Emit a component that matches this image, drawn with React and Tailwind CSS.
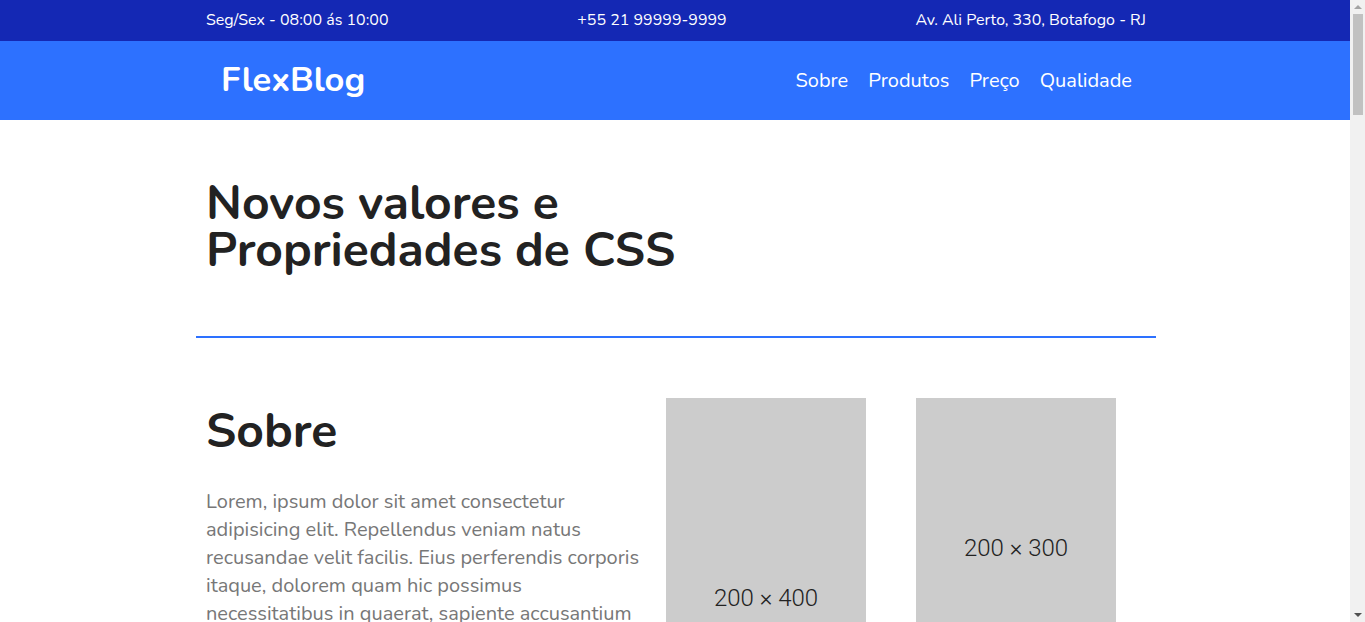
import React from 'react';

const font = { fontFamily: 'Nunito, Lato, "Open Sans", sans-serif' };

const lorem =
  'Lorem, ipsum dolor sit amet consectetur adipisicing elit. Repellendus veniam natus recusandae velit facilis. Eius perferendis corporis itaque, dolorem quam hic possimus necessitatibus in quaerat, sapiente accusantium ipsam nihil quas officiis dolorum, modi explicabo tempora ad voluptate.';

// gray placeholder box like the placeholder.com images
const Placeholder = ({ w, h }) => (
  <div
    className="bg-[#cccccc] flex items-center justify-center text-[#222] text-[24px] font-light shrink-0"
    style={{ width: w, height: h, fontFamily: 'Roboto, sans-serif' }}
  >
    {w} × {h}
  </div>
);

// classic windows scrollbar sitting over the right edge
const Scrollbar = () => (
  <div className="fixed top-0 right-0 h-screen w-[15px] bg-[#f1f1f1] flex flex-col items-center">
    <div className="mt-[5px] w-0 h-0 border-l-[4px] border-r-[4px] border-b-[4px] border-l-transparent border-r-transparent border-b-[#a3a3a3]" />
    <div className="mt-[5px] w-[10px] h-[101px] bg-[#c1c1c1]" />
    <div className="mt-auto mb-[5px] w-0 h-0 border-l-[4px] border-r-[4px] border-t-[4px] border-l-transparent border-r-transparent border-t-[#505050]" />
  </div>
);

export default function App() {
  const links = ['Sobre', 'Produtos', 'Preço', 'Qualidade'];

  return (
    <div className="min-h-[1400px] bg-white mr-[15px]" style={font}>
      {/* top info bar */}
      <div className="bg-[#1428b4] text-white pl-[2px]">
        <div className="max-w-[960px] mx-auto h-[41px] px-[10px] pb-[2px] flex items-center justify-between text-[16px]">
          <span>Seg/Sex - 08:00 ás 10:00</span>
          <span>+55 21 99999-9999</span>
          <span>Av. Ali Perto, 330, Botafogo - RJ</span>
        </div>
      </div>

      {/* main header */}
      <header className="bg-[#2d71ff] text-white pl-[2px]">
        <div className="max-w-[960px] mx-auto h-[79px] pl-[25px] pr-[24px] flex items-center justify-between">
          <a href="#" className="text-[34.5px] font-bold leading-none">FlexBlog</a>
          <nav className="flex gap-5 text-[20px]">
            {links.map(l => (
              <a key={l} href="#">{l}</a>
            ))}
          </nav>
        </div>
      </header>

      <main className="pl-[2px]">
        {/* intro */}
        <section className="max-w-[960px] mx-auto pt-[60px] pb-[62px] px-[10px]">
          <h1 className="max-w-[560px] text-[48px] leading-[47px] font-bold text-[#222]">
            Novos valores e Propriedades de CSS
          </h1>
        </section>
        <div className="max-w-[960px] mx-auto h-[2px] bg-[#2d71ff]" />

        {/* sobre */}
        <section className="max-w-[960px] mx-auto pt-[60px] flex items-start">
          <div className="w-[460px] px-[10px] shrink-0">
            <h2 className="mt-[4px] text-[48px] leading-[58px] font-bold text-[#222]">Sobre</h2>
            <p className="mt-[28px] text-[20px] leading-[28px] text-[#777]">{lorem}</p>
          </div>
          <div className="ml-[10px] flex gap-[50px]">
            <Placeholder w={200} h={400} />
            <Placeholder w={200} h={300} />
          </div>
        </section>
      </main>

      <Scrollbar />
    </div>
  );
}
